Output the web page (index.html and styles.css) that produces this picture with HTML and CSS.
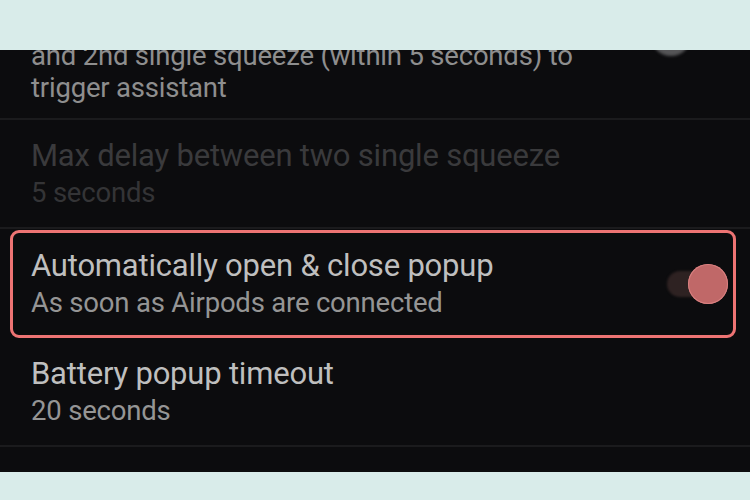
FILE: index.html
```html
<!DOCTYPE html>
<html>
<head>
<meta charset="utf-8">
<link rel="stylesheet" href="styles.css">
</head>
<body>
<div class="panel">
  <div class="row row-first">
    <div class="text">
      <div class="sub">and 2nd single squeeze (within 5 seconds) to</div>
      <div class="sub">trigger assistant</div>
    </div>
    <div class="knob-off"></div>
  </div>
  <div class="row dim">
    <div class="text">
      <div class="title">Max delay between two single squeeze</div>
      <div class="sub">5 seconds</div>
    </div>
  </div>
  <div class="row row-box">
    <div class="box">
      <div class="text">
        <div class="title">Automatically open &amp; close popup</div>
        <div class="sub">As soon as Airpods are connected</div>
      </div>
      <div class="toggle">
        <div class="track"></div>
        <div class="knob"></div>
      </div>
    </div>
  </div>
  <div class="row">
    <div class="text">
      <div class="title">Battery popup timeout</div>
      <div class="sub">20 seconds</div>
    </div>
  </div>
</div>
</body>
</html>
```

FILE: styles.css
```css
html, body {
  margin: 0;
  padding: 0;
  background: #d9ecea;
  width: 750px;
  height: 500px;
  overflow: hidden;
}
.panel {
  margin-top: 50px;
  height: 422px;
  background: #0c0c0e;
  overflow: hidden;
  font-family: Roboto, "Liberation Sans", sans-serif;
}
.row {
  display: flex;
  align-items: center;
  justify-content: space-between;
  height: 107px;
  padding: 0 22px 0 31px;
  border-bottom: 2px solid #1b1b1d;
}
.row-first {
  height: 68px;
  align-items: flex-start;
}
.row-first .text {
  padding-top: 2px;
}
.row-first .sub {
  line-height: 32px;
  color: #8e8e8e;
}
.row-first .text .sub:first-child {
  margin-top: -12px;
}
.knob-off {
  width: 40px;
  height: 40px;
  border-radius: 50%;
  background: #555557;
  margin-top: -34px;
  margin-right: 37px;
  filter: blur(1.5px);
}
.title {
  font-size: 31px;
  line-height: 37px;
  color: #bfbfbf;
  letter-spacing: -0.2px;
}
.sub {
  font-size: 27.5px;
  line-height: 37px;
  color: #959595;
  letter-spacing: -0.2px;
}
.dim .title { color: #3a3a3c; }
.dim .sub { color: #343436; }
.row-box {
  padding: 0 14px 0 10px;
  height: 109px;
  border-bottom: none;
}
.box {
  flex: 1;
  display: flex;
  align-items: center;
  justify-content: space-between;
  height: 102px;
  border: 3px solid #ee7474;
  border-radius: 9px;
  padding: 0 5px 0 18px;
}
.toggle {
  position: relative;
  width: 61px;
  height: 40px;
  display: flex;
  align-items: center;
}
.track {
  width: 52px;
  height: 26px;
  border-radius: 13px;
  background: #2e2222;
  filter: blur(1px);
}
.knob {
  position: absolute;
  right: 0;
  top: 0;
  width: 40px;
  height: 40px;
  border-radius: 50%;
  background: #c06868;
  box-shadow: inset 0 0 0 1px #d98080;
}
```
